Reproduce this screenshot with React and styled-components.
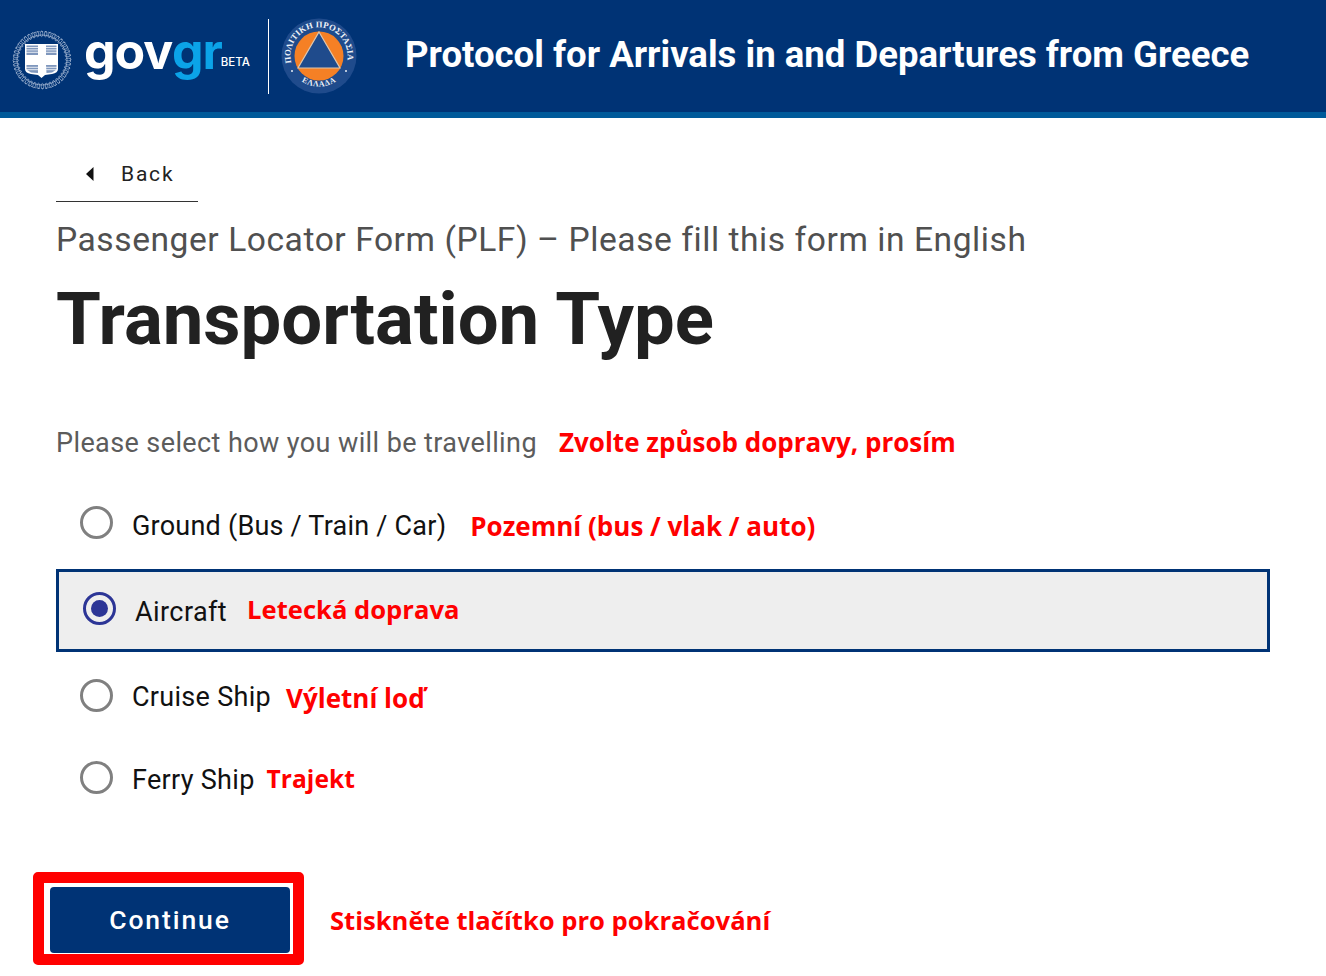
import React from "react";
import styled, { createGlobalStyle } from "styled-components";

const Global = createGlobalStyle`
  html, body { margin: 0; padding: 0; background: #fff; }
  body { font-family: Roboto, "Liberation Sans", sans-serif; }
`;

const Page = styled.div`
  width: 1326px;
  height: 976px;
  overflow: hidden;
`;

const Header = styled.header`
  height: 112px;
  background: #003375;
  border-bottom: 6px solid #005a9a;
  display: flex;
  align-items: center;
  padding-left: 12px;
`;

const CrestIcon = styled.svg`
  flex: none;
  margin-top: 7px;
`;

const EmblemIcon = styled.svg`
  flex: none;
`;

const Wordmark = styled.div`
  flex: none;
  display: flex;
  align-items: baseline;
  margin-left: 12px;
  width: 184px;
  height: 60px;
  box-sizing: border-box;
  font-family: Inter, sans-serif;
  font-weight: 700;
  font-size: 50px;
  line-height: 50px;
  letter-spacing: -1.1px;
  color: #fff;
`;

const Gr = styled.span`
  color: #0ba3e8;
`;

const Beta = styled.span`
  font-size: 11.5px;
  font-weight: 500;
  letter-spacing: 0;
  margin-left: -1px;
  transform: translateY(-3px);
`;

const Divider = styled.div`
  flex: none;
  width: 1px;
  height: 75px;
  background: #fff;
  margin-right: 12px;
`;

const HeaderTitle = styled.h1`
  margin: 0 0 3px 48px;
  font-size: 36.55px;
  font-weight: 700;
  color: #fff;
  white-space: nowrap;
`;

const Main = styled.main`
  padding: 38px 56px 0;
`;

const BackLink = styled.a`
  display: flex;
  align-items: center;
  box-sizing: border-box;
  width: 142px;
  height: 46px;
  border-bottom: 1px solid #333;
  padding: 0 0 10px 30px;
  font-size: 21px;
  letter-spacing: 1.8px;
  color: #222;
`;

const BackArrow = styled.svg`
  width: 8px;
  height: 14px;
  margin-right: 27px;
`;

const Caption = styled.p`
  margin: 18px 0 0;
  font-size: 33.6px;
  line-height: 40px;
  letter-spacing: 0.55px;
  color: #505050;
  white-space: nowrap;
`;

const Title = styled.h2`
  margin: 18px 0 0;
  font-size: 72.5px;
  line-height: 84px;
  font-weight: 700;
  color: #212121;
  white-space: nowrap;
`;

const Prompt = styled.div`
  display: flex;
  align-items: center;
  margin-top: 61px;
  height: 40px;
  font-size: 27px;
  letter-spacing: 0.4px;
  color: #5c5c5c;
`;

const Note = styled.span`
  font-family: "Open Sans", sans-serif;
  font-weight: 700;
  letter-spacing: 0;
  color: #f00;
  white-space: nowrap;
  font-size: ${p => p.$size || 26}px;
  margin-left: ${p => p.$gap || 0}px;
  transform: translateY(${p => p.$shift || 0}px);
`;

const Options = styled.div`
  display: flex;
  flex-direction: column;
  margin-top: 16px;
`;

const Option = styled.div`
  display: flex;
  align-items: center;
  box-sizing: border-box;
  height: ${p => p.$height}px;
  padding: ${p => p.$top || 0}px 0 0 24px;
  font-size: 27px;
  letter-spacing: ${p => p.$tracking ?? 0.3}px;
  color: #111;
  white-space: nowrap;
  background: ${p => (p.$selected ? "#eeeeee" : "transparent")};
  border: ${p => (p.$selected ? "3px solid #003375" : "none")};
`;

const Radio = styled.span`
  flex: none;
  display: flex;
  align-items: center;
  justify-content: center;
  box-sizing: border-box;
  width: 33px;
  height: 33px;
  border-radius: 50%;
  border: 3px solid ${p => (p.$checked ? "#2c3596" : "#808080")};
  margin: 0 19px ${p => p.$lift ?? 4}px 0;
`;

const Dot = styled.span`
  width: 17px;
  height: 17px;
  border-radius: 50%;
  background: #2c3596;
`;

const Actions = styled.div`
  display: flex;
  align-items: center;
  margin: 56px 0 0 -23px;
`;

const ButtonFrame = styled.div`
  box-sizing: border-box;
  width: 271px;
  height: 93px;
  border: 11px solid #f00;
  border-radius: 5px;
  padding: 4px 3px 3px 6px;
`;

const Button = styled.button`
  display: block;
  width: 240px;
  height: 66px;
  border: none;
  border-radius: 4px;
  padding: 0 0 2px;
  background: #003375;
  color: #fff;
  font-family: Roboto, sans-serif;
  font-size: 26.500px;
  font-weight: 500;
  letter-spacing: 1.9px;
`;

function Crest() {
  const leaves = Array.from({ length: 40 }, (_, i) => i * 9);
  return (
    <CrestIcon width="60" height="60" viewBox="0 0 60 60">
      <circle cx="30" cy="30" r="25" fill="none" stroke="#8ea4c6" strokeWidth=".8" />
      <circle cx="30" cy="30" r="28.500" fill="none" stroke="#b4c4dc" strokeWidth=".7" strokeDasharray="2 1.600" />
      {leaves.map(a => (
        <ellipse key={a} cx="30" cy="3.800" rx="1.300" ry="2.800" fill="none" stroke="#b4c4dc" strokeWidth=".6" transform={`rotate(${a + 8} 30 30)`} />
      ))}
      <path d="M13 14h33v25q0 4-6 5l-7 1-3.500 3-3.500-3-7-1q-6-1-6-5z" fill="#fff" />
      <g fill="#7f97bd">
        <path d="M14.500 15.500H26v9.500H14.500zM34 15.500h10.500v9.500H34zM14.500 35H26v8l-7-.500-4.500-3zM34 35h10.500v4.500l-4.500 3-5.500.500z" />
      </g>
      <g stroke="#fff" strokeWidth=".8">
        <path d="M14 17.500h12M14 19.900h12M14 22.300h12M34 17.500h11M34 19.900h11M34 22.300h11" />
        <path d="M14 37.300h12M14 39.700h12M34 37.300h11M34 39.700h11" />
      </g>
    </CrestIcon>
  );
}

function CivilProtection() {
  return (
    <EmblemIcon width="76" height="76" viewBox="0 0 76 76">
      <defs>
        <path id="top-arc" d="M10.400 45A28.500 28.500 0 1 1 65.600 45" />
        <path id="bottom-arc" d="M10 52A32 32 0 0 0 66 52" />
      </defs>
      <circle cx="38" cy="38" r="37.500" fill="#1f4b8c" />
      <circle cx="38" cy="38" r="24.500" fill="#f58025" />
      <path d="M38 14L59 50H17Z" fill="#1f4b8c" stroke="#e0c6ac" strokeWidth="1.200" />
      <circle cx="11" cy="53" r="1" fill="#e8edf5" />
      <circle cx="65" cy="53" r="1" fill="#e8edf5" />
      <text fontFamily="'Liberation Serif', serif" fontWeight="700" fontSize="8.600" letterSpacing=".2" fill="#eef2f8">
        <textPath href="#top-arc">ΠΟΛΙΤΙΚΗ ΠΡΟΣΤΑΣΙΑ</textPath>
      </text>
      <text fontFamily="'Liberation Serif', serif" fontWeight="700" fontSize="8" letterSpacing=".6" fill="#eef2f8" textAnchor="middle">
        <textPath href="#bottom-arc" startOffset="50%">ΕΛΛΑΔΑ</textPath>
      </text>
    </EmblemIcon>
  );
}

export default function App() {
  return (
    <Page>
      <Global />
      <Header>
        <Crest />
        <Wordmark>
          gov<Gr>gr</Gr>
          <Beta>BETA</Beta>
        </Wordmark>
        <Divider />
        <CivilProtection />
        <HeaderTitle>Protocol for Arrivals in and Departures from Greece</HeaderTitle>
      </Header>
      <Main>
        <BackLink>
          <BackArrow viewBox="0 0 8 14"><path d="M7.500 0V14L0 7Z" fill="#111" /></BackArrow>
          Back
        </BackLink>
        <Caption>Passenger Locator Form (PLF) – Please fill this form in English</Caption>
        <Title>Transportation Type</Title>
        <Prompt>
          Please select how you will be travelling
          <Note $gap={22} $shift={-1}>Zvolte způsob dopravy, prosím</Note>
        </Prompt>
        <Options>
          <Option $height={90} $top={4} $tracking={0.22}>
            <Radio $lift={8} />
            Ground (Bus / Train / Car)
            <Note $gap={24}>Pozemní (bus / vlak / auto)</Note>
          </Option>
          <Option $height={83} $top={2} $tracking={0.42} $selected>
            <Radio $checked $lift={6}><Dot /></Radio>
            Aircraft
            <Note $gap={20} $size={25.6} $shift={-2}>Letecká doprava</Note>
          </Option>
          <Option $height={90}>
            <Radio />
            Cruise Ship
            <Note $gap={15} $shift={1}>Výletní loď</Note>
          </Option>
          <Option $height={74} $top={2}>
            <Radio $lift={6} />
            Ferry Ship
            <Note $gap={12} $size={24.6} $shift={-2}>Trajekt</Note>
          </Option>
        </Options>
        <Actions>
          <ButtonFrame>
            <Button>Continue</Button>
          </ButtonFrame>
          <Note $gap={26} $size={25.6} $shift={2}>Stiskněte tlačítko pro pokračování</Note>
        </Actions>
      </Main>
    </Page>
  );
}
